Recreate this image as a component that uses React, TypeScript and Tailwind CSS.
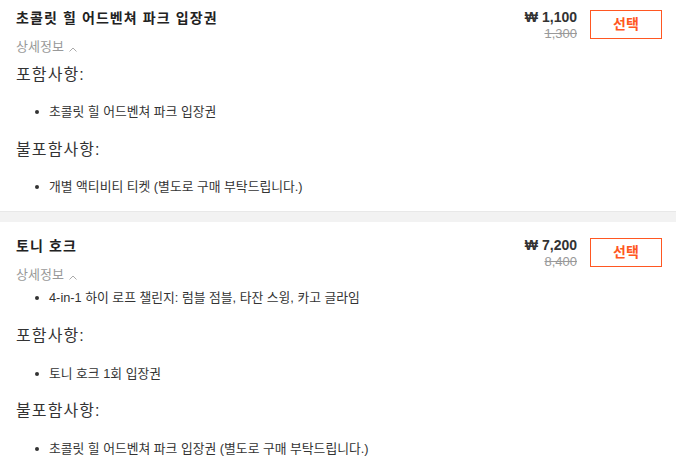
const font = { fontFamily: '"Liberation Sans", "Noto Sans CJK KR", sans-serif' };

function Caret() {
  return (
    <svg width="8" height="5" viewBox="0 0 8 5" className="ml-[5px] mt-[5px]">
      <path d="M0.5 4.5 L4 1 L7.5 4.5" fill="none" stroke="#aaa" strokeWidth="1" />
    </svg>
  );
}

function Bullet({ children, className = "" }) {
  return (
    <div className={`flex items-center text-[12.8px] leading-[20px] text-[#333] ${className}`}>
      <span className="ml-[19px] mr-[10px] h-[4px] w-[4px] rounded-full bg-[#333]" />
      <span>{children}</span>
    </div>
  );
}

function Heading({ children, className = "" }) {
  return <div className={`text-[16px] leading-[24px] tracking-[1.1px] text-[#333] ${className}`}>{children}</div>;
}

function PriceBox({ price, original }) {
  return (
    <div className="flex shrink-0 items-start pr-[14px]">
      <div className="flex flex-col items-end">
        <div className="text-[14px] font-bold leading-[18px] text-[#333]">₩ {price}</div>
        <div className="text-[13px] leading-[16px] text-[#999] line-through">{original}</div>
      </div>
      <button className="ml-[13px] mt-[2px] h-[29px] w-[72px] border border-[#ff5722] text-[14px] font-bold text-[#ff5722]">
        선택
      </button>
    </div>
  );
}

export default function App() {
  return (
    <div className="h-[470px] w-[676px] overflow-hidden bg-white" style={font}>
      <section className="flex pb-[14px] pt-[8px]">
        <div className="flex-1 pl-4">
          <div className="text-[14px] font-bold leading-[20px] tracking-[1.1px] text-[#222]">초콜릿 힐 어드벤쳐 파크 입장권</div>
          <div className="mt-[10px] flex items-center text-[13px] leading-[18px] text-[#999]">
            상세정보
            <Caret />
          </div>
          <Heading className="mt-[7px]">포함사항:</Heading>
          <Bullet className="mt-[15px]">초콜릿 힐 어드벤쳐 파크 입장권</Bullet>
          <Heading className="mt-[16px]">불포함사항:</Heading>
          <Bullet className="mt-[15px]">개별 액티비티 티켓 (별도로 구매 부탁드립니다.)</Bullet>
        </div>
        <PriceBox price="1,100" original="1,300" />
      </section>

      <div className="h-[11px] border-t border-[#e8e8e8] bg-[#f2f2f2]" />

      <section className="flex pt-[14px]">
        <div className="flex-1 pl-4">
          <div className="text-[14px] font-bold leading-[20px] tracking-[1.1px] text-[#222]">토니 호크</div>
          <div className="mt-[10px] flex items-center text-[13px] leading-[18px] text-[#999]">
            상세정보
            <Caret />
          </div>
          <Bullet className="mt-[4px]">4-in-1 하이 로프 챌린지: 럼블 점블, 타잔 스윙, 카고 글라임</Bullet>
          <Heading className="mt-[16px]">포함사항:</Heading>
          <Bullet className="mt-[16px]">토니 호크 1회 입장권</Bullet>
          <Heading className="mt-[15px]">불포함사항:</Heading>
          <Bullet className="mt-[16px]">초콜릿 힐 어드벤쳐 파크 입장권 (별도로 구매 부탁드립니다.)</Bullet>
        </div>
        <PriceBox price="7,200" original="8,400" />
      </section>
    </div>
  );
}
